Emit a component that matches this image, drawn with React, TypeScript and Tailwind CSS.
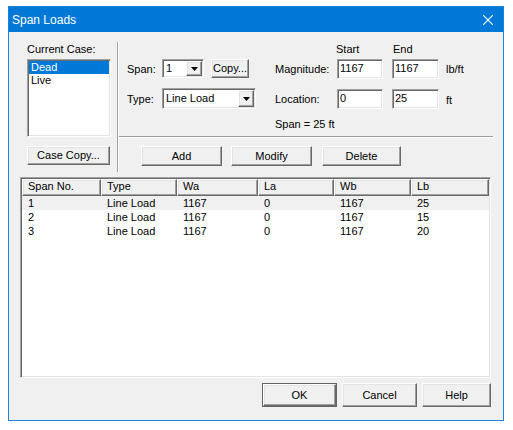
import type { ReactNode } from "react";

const sunken =
  "border border-t-[#a0a0a0] border-l-[#a0a0a0] border-r-white border-b-white shadow-[inset_1px_1px_0_#696969,inset_-1px_-1px_0_#e3e3e3]";
const raised =
  "border border-t-white border-l-white border-r-[#696969] border-b-[#696969] shadow-[inset_-1px_-1px_0_#a0a0a0,inset_1px_1px_0_#e3e3e3] bg-[#f0f0f0]";

function Btn({ children, className = "" }: { children: ReactNode; className?: string }) {
  return (
    <div className={`flex shrink-0 items-center justify-center ${raised} ${className}`}>
      <span className="leading-[13px]">{children}</span>
    </div>
  );
}

function Tri() {
  return (
    <svg width="7" height="4" viewBox="0 0 7 4">
      <polygon points="0,0 7,0 3.5,4" fill="#000" />
    </svg>
  );
}

function Combo({ value, className = "" }: { value: string; className?: string }) {
  return (
    <div className={`flex shrink-0 bg-white p-[1px] ${sunken} ${className}`}>
      <div className="flex flex-1 items-center pl-[2px] leading-[13px]">{value}</div>
      <div className={`flex w-[16px] items-center justify-center ${raised}`}>
        <Tri />
      </div>
    </div>
  );
}

function Field({ value, className = "" }: { value: string; className?: string }) {
  return (
    <div className={`flex shrink-0 items-center bg-white pl-[2px] ${sunken} ${className}`}>
      <span className="leading-[13px]">{value}</span>
    </div>
  );
}

const cols = [
  { name: "Span No.", w: "w-[79px]" },
  { name: "Type", w: "w-[76px]" },
  { name: "Wa", w: "w-[81px]" },
  { name: "La", w: "w-[76px]" },
  { name: "Wb", w: "w-[77px]" },
  { name: "Lb", w: "w-[78px]" },
];

const rows = [
  ["1", "Line Load", "1167", "0", "1167", "25"],
  ["2", "Line Load", "1167", "0", "1167", "15"],
  ["3", "Line Load", "1167", "0", "1167", "20"],
];

export default function App() {
  return (
    <div className="h-[430px] w-[513px] overflow-hidden bg-white pt-[6px] pl-[8px] font-['Liberation_Sans',Arial,sans-serif] text-[11px] text-black">
      <div className="flex h-[415px] w-[496px] flex-col border border-[#1883d7]">
        {/* title bar */}
        <div className="flex h-[25px] items-center justify-between bg-[#0078d7] pl-[3px] pr-[10px] text-white">
          <span className="text-[12px]">Span Loads</span>
          <svg width="10" height="10" viewBox="0 0 10 10">
            <path d="M0 0 L10 10 M10 0 L0 10" stroke="#fff" strokeWidth="1.1" />
          </svg>
        </div>

        <div className="flex-1 bg-[#f0f0f0]">
          <div className="flex h-[145px]">
            {/* current case */}
            <div className="ml-[18px] w-[84px] shrink-0 pt-[11px]">
              <div className="h-[13px] leading-[13px]">Current Case:</div>
              <div className={`mt-[3px] h-[78px] bg-white p-[1px] ${sunken}`}>
                <div className="h-[13px] bg-[#0078d7] pl-[2px] leading-[13px] text-white">Dead</div>
                <div className="h-[13px] pl-[2px] leading-[13px]">Live</div>
              </div>
              <Btn className="mt-[9px] h-[19px] w-[83px]">Case Copy...</Btn>
            </div>

            <div className="ml-[6px] mt-[10px] h-[130px] w-[2px] shrink-0 border-l border-r border-l-[#a0a0a0] border-r-white" />

            {/* load editor */}
            <div className="w-[375px] shrink-0 pt-[11px]">
              <div className="flex h-[13px] leading-[13px]">
                <span className="ml-[217px] w-[57px]">Start</span>
                <span>End</span>
              </div>
              <div className="mt-[2px] flex h-[21px] items-center">
                <span className="ml-[8px] mt-[2px] w-[35px] shrink-0">Span:</span>
                <Combo value="1" className="h-[19px] w-[42px]" />
                <Btn className="ml-[7px] h-[19px] w-[38px]">Copy...</Btn>
                <span className="ml-[26px] mt-[2px] w-[62px] shrink-0">Magnitude:</span>
                <Field value="1167" className="h-[20px] w-[46px]" />
                <Field value="1167" className="ml-[9px] h-[20px] w-[47px]" />
                <span className="ml-[7px] mt-[2px]">lb/ft</span>
              </div>
              <div className="mt-[9px] flex h-[21px] items-center">
                <span className="ml-[8px] mt-[1px] w-[35px] shrink-0">Type:</span>
                <Combo value="Line Load" className="h-[21px] w-[94px]" />
                <span className="ml-[19px] mt-[1px] w-[62px] shrink-0">Location:</span>
                <Field value="0" className="h-[20px] w-[46px]" />
                <Field value="25" className="ml-[9px] h-[20px] w-[47px]" />
                <span className="ml-[7px] mt-[4px]">ft</span>
              </div>
              <div className="mt-[9px] ml-[156px] h-[13px] leading-[13px]">Span = 25 ft</div>
              <div className="mt-[5px] h-[2px] w-[374px] border-t border-b border-t-[#a0a0a0] border-b-white" />
              <div className="mt-[8px] flex">
                <Btn className="ml-[22px] h-[20px] w-[81px]">Add</Btn>
                <Btn className="ml-[9px] h-[20px] w-[81px]">Modify</Btn>
                <Btn className="ml-[10px] h-[20px] w-[79px]">Delete</Btn>
              </div>
            </div>
          </div>

          {/* loads list */}
          <div className={`ml-[11px] h-[201px] w-[471px] overflow-hidden bg-white p-[1px] ${sunken}`}>
            <div className="flex h-[17px]">
              {cols.map((c) => (
                <div
                  key={c.name}
                  className={`flex shrink-0 items-center pb-[2px] pl-[5px] leading-[13px] ${raised} ${c.w}`}
                >
                  {c.name}
                </div>
              ))}
            </div>
            {rows.map((r, i) => (
              <div key={i} className={`flex h-[14px] ${i === 0 ? "bg-[#f0f0f0]" : ""}`}>
                {r.map((v, j) => (
                  <div key={j} className={`shrink-0 pl-[6px] leading-[14px] ${cols[j].w}`}>
                    {v}
                  </div>
                ))}
              </div>
            ))}
          </div>

          {/* dialog buttons */}
          <div className="mt-[5px] flex justify-end pr-[12px]">
            <div className="border border-[#646464]">
              <Btn className="h-[22px] w-[73px]">OK</Btn>
            </div>
            <Btn className="ml-[5px] h-[24px] w-[75px]">Cancel</Btn>
            <Btn className="ml-[5px] h-[24px] w-[69px]">Help</Btn>
          </div>
        </div>
      </div>
    </div>
  );
}
